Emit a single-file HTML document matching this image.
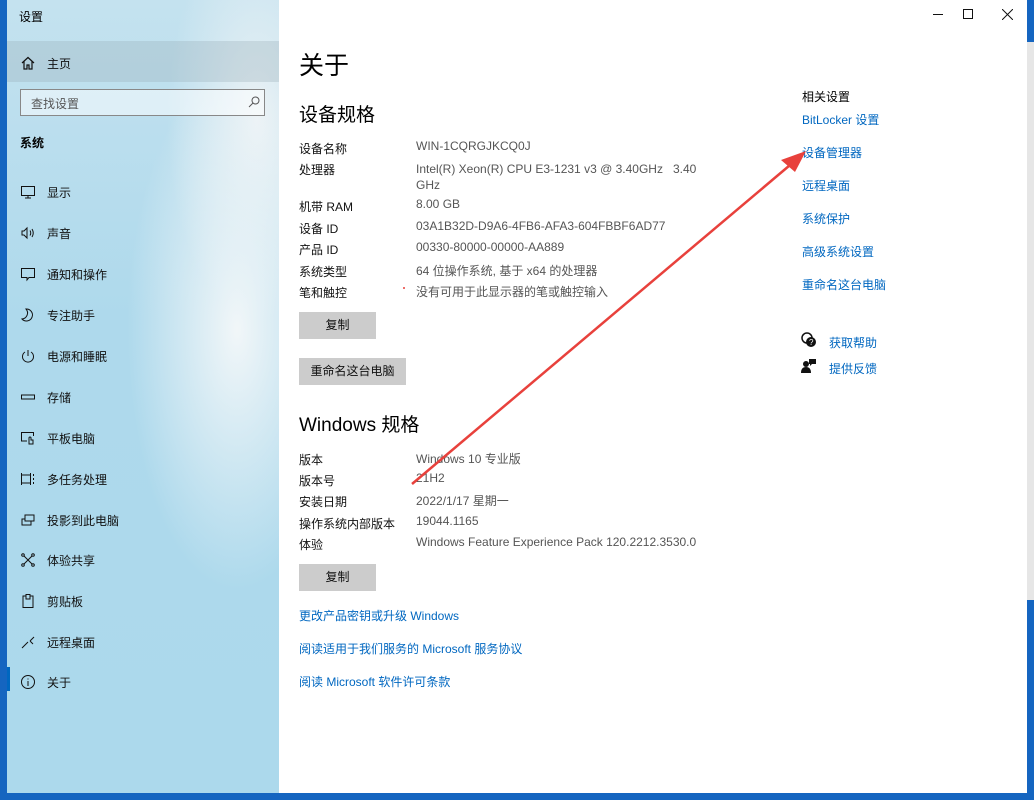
<!DOCTYPE html>
<html><head><meta charset="utf-8"><style>
*{margin:0;padding:0;box-sizing:border-box}
body{width:1034px;height:800px;position:relative;overflow:hidden;background:#1565c0;font-family:"Liberation Sans","Noto Sans CJK SC",sans-serif;font-size:12px;color:#000}
.abs{position:absolute;white-space:nowrap}
#side{position:absolute;left:7px;top:0;width:272px;height:793px;background:radial-gradient(ellipse 110px 260px at 230px 330px,rgba(245,248,249,.95),rgba(245,248,249,0)),radial-gradient(ellipse 90px 200px at 250px 120px,rgba(240,244,246,.9),rgba(240,244,246,0)),linear-gradient(180deg,#c4e2ef 0%,#aed9ec 40%,#acd9ec 100%)}
#main{position:absolute;left:279px;top:0;width:748px;height:793px;background:#fff}
.nav{position:absolute;left:40px;font-size:12px;color:#111}
.ic{position:absolute;left:13px;width:16px;height:16px}
.lbl{position:absolute;left:20px;color:#111}
.val{position:absolute;left:137px;color:#555}
.btn{position:absolute;left:20px;background:#ccc;height:27px;text-align:center;line-height:27px;color:#111}
.link{position:absolute;color:#0067c0}
</style></head><body>
<div class="abs" style="left:1027px;top:42px;width:7px;height:558px;background:#e6e6e6"></div>
<div id="side">
 <div class="abs" style="left:12px;top:8px;font-size:12px">设置</div>
 <div class="abs" style="left:0;top:41px;width:272px;height:41px;background:rgba(150,170,180,.3)"></div>
 <svg class="ic" style="top:55px" viewBox="0 0 16 16" fill="none" stroke="#111" stroke-width="1.2"><path d="M2 8L8 2.5 14 8M4 6.5V14h3v-4h2v4h3V6.5"/></svg>
 <div class="nav" style="top:55px">主页</div>
 <div class="abs" style="left:13px;top:89px;width:245px;height:27px;border:1.5px solid #888;background:rgba(255,255,255,.5)"></div>
 <div class="abs" style="left:24px;top:95px;color:#555">查找设置</div>
 <svg class="abs" style="left:240px;top:95px" width="14" height="14" viewBox="0 0 14 14" fill="none" stroke="#555"><circle cx="8.5" cy="5.5" r="3.5"/><path d="M6 8L2 12"/></svg>
 <div class="abs" style="left:13px;top:134px;font-weight:bold">系统</div>
 <svg class="ic" style="top:184px" viewBox="0 0 16 16" fill="none" stroke="#111"><rect x="1.5" y="2.5" width="13" height="9"/><path d="M5 14h6M8 11.5V14"/></svg><div class="nav" style="top:184px">显示</div>
 <svg class="ic" style="top:225px" viewBox="0 0 16 16" fill="none" stroke="#111"><path d="M2 6h2l3-3v10l-3-3H2zM10 5.5q1.5 2.5 0 5M12 4q2.5 4 0 8"/></svg><div class="nav" style="top:225px">声音</div>
 <svg class="ic" style="top:266px" viewBox="0 0 16 16" fill="none" stroke="#111"><path d="M1.5 2.5h13v9H9l-2 2.5v-2.5H1.5z"/></svg><div class="nav" style="top:266px">通知和操作</div>
 <svg class="ic" style="top:307px" viewBox="0 0 16 16" fill="none" stroke="#111"><path d="M6 2a6 6 0 1 1-4 10A6 6 0 0 0 6 2z"/></svg><div class="nav" style="top:307px">专注助手</div>
 <svg class="ic" style="top:348px" viewBox="0 0 16 16" fill="none" stroke="#111"><path d="M5 4a5.5 5.5 0 1 0 6 0M8 2v6"/></svg><div class="nav" style="top:348px">电源和睡眠</div>
 <svg class="ic" style="top:389px" viewBox="0 0 16 16" fill="none" stroke="#111"><rect x="1.5" y="6" width="13" height="4"/></svg><div class="nav" style="top:389px">存储</div>
 <svg class="ic" style="top:430px" viewBox="0 0 16 16" fill="none" stroke="#111"><path d="M7 11H1.5V2.5h12V6M9 14V8a1 1 0 0 1 2 0v2h2v4z"/></svg><div class="nav" style="top:430px">平板电脑</div>
 <svg class="ic" style="top:471px" viewBox="0 0 16 16" fill="none" stroke="#111"><path d="M1.5 2v12M10.5 2v12M1.5 4h9M1.5 12h9M13.5 3v2M13.5 7v2M13.5 11v2"/></svg><div class="nav" style="top:471px">多任务处理</div>
 <svg class="ic" style="top:512px" viewBox="0 0 16 16" fill="none" stroke="#111"><rect x="5" y="3" width="9" height="6"/><path d="M5 7H2v6h9v-4"/></svg><div class="nav" style="top:512px">投影到此电脑</div>
 <svg class="ic" style="top:552px" viewBox="0 0 16 16" fill="none" stroke="#111"><path d="M4 4l8 8M12 4l-8 8"/><circle cx="3" cy="3" r="1.3"/><circle cx="13" cy="3" r="1.3"/><circle cx="3" cy="13" r="1.3"/><circle cx="13" cy="13" r="1.3"/></svg><div class="nav" style="top:552px">体验共享</div>
 <svg class="ic" style="top:593px" viewBox="0 0 16 16" fill="none" stroke="#111"><path d="M3 3h3V1.5h4V3h3v11.5H3zM6 3v3h4V3"/></svg><div class="nav" style="top:593px">剪贴板</div>
 <svg class="ic" style="top:634px" viewBox="0 0 16 16" fill="none" stroke="#111"><path d="M2 14l6-6M14 3l-4 4M10 7l3 3"/></svg><div class="nav" style="top:634px">远程桌面</div>
 <div class="abs" style="left:0;top:667px;width:3px;height:24px;background:#0067c0"></div>
 <svg class="ic" style="top:674px" viewBox="0 0 16 16" fill="none" stroke="#111"><circle cx="8" cy="8" r="6.5"/><path d="M8 7v5M8 4.5v1"/></svg><div class="nav" style="top:674px">关于</div>
</div>
<div id="main">
 <div class="abs" style="left:654px;top:14px;width:10px;height:1px;background:#111"></div>
 <div class="abs" style="left:684px;top:9px;width:10px;height:10px;border:1px solid #111"></div>
 <svg class="abs" style="left:723px;top:9px" width="11" height="11" stroke="#111"><path d="M0 0L11 11M11 0L0 11"/></svg>
 <div class="abs" style="left:20px;top:46px;font-size:25px">关于</div>
 <div class="abs" style="left:20px;top:100px;font-size:19px">设备规格</div>
 <div class="lbl" style="top:140px">设备名称</div><div class="val" style="top:139px">WIN-1CQRGJKCQ0J</div>
 <div class="lbl" style="top:161px">处理器</div><div class="val" style="top:161px;line-height:16px">Intel(R) Xeon(R) CPU E3-1231 v3 @ 3.40GHz&nbsp;&nbsp; 3.40<br>GHz</div>
 <div class="lbl" style="top:198px">机带 RAM</div><div class="val" style="top:197px">8.00 GB</div>
 <div class="lbl" style="top:220px">设备 ID</div><div class="val" style="top:219px">03A1B32D-D9A6-4FB6-AFA3-604FBBF6AD77</div>
 <div class="lbl" style="top:241px">产品 ID</div><div class="val" style="top:240px">00330-80000-00000-AA889</div>
 <div class="lbl" style="top:263px">系统类型</div><div class="val" style="top:262px">64 位操作系统, 基于 x64 的处理器</div>
 <div class="lbl" style="top:284px">笔和触控</div><div class="val" style="top:283px">没有可用于此显示器的笔或触控输入</div>
 <div class="btn" style="top:312px;width:77px">复制</div>
 <div class="btn" style="top:358px;width:107px">重命名这台电脑</div>
 <div class="abs" style="left:20px;top:410px;font-size:19px">Windows 规格</div>
 <div class="lbl" style="top:451px">版本</div><div class="val" style="top:450px">Windows 10 专业版</div>
 <div class="lbl" style="top:472px">版本号</div><div class="val" style="top:471px">21H2</div>
 <div class="lbl" style="top:493px">安装日期</div><div class="val" style="top:492px">2022/1/17 星期一</div>
 <div class="lbl" style="top:515px">操作系统内部版本</div><div class="val" style="top:514px">19044.1165</div>
 <div class="lbl" style="top:536px">体验</div><div class="val" style="top:535px">Windows Feature Experience Pack 120.2212.3530.0</div>
 <div class="btn" style="top:564px;width:77px">复制</div>
 <div class="link" style="left:20px;top:607px">更改产品密钥或升级 Windows</div>
 <div class="link" style="left:20px;top:640px">阅读适用于我们服务的 Microsoft 服务协议</div>
 <div class="link" style="left:20px;top:673px">阅读 Microsoft 软件许可条款</div>
 <div class="abs" style="left:523px;top:88px">相关设置</div>
 <div class="link" style="left:523px;top:111px">BitLocker 设置</div>
 <div class="link" style="left:523px;top:144px">设备管理器</div>
 <div class="link" style="left:523px;top:177px">远程桌面</div>
 <div class="link" style="left:523px;top:210px">系统保护</div>
 <div class="link" style="left:523px;top:243px">高级系统设置</div>
 <div class="link" style="left:523px;top:276px">重命名这台电脑</div>
 <svg class="abs" style="left:522px;top:332px" width="16" height="16" viewBox="0 0 16 16"><circle cx="6" cy="6" r="5" fill="none" stroke="#111" stroke-width="1.5"/><circle cx="10" cy="10" r="5" fill="#111"/><text x="8" y="13" font-size="8" fill="#fff" font-family="Liberation Sans">?</text></svg>
 <div class="link" style="left:550px;top:334px">获取帮助</div>
 <svg class="abs" style="left:522px;top:358px" width="16" height="16" viewBox="0 0 16 16" fill="#111"><circle cx="5" cy="6" r="3"/><path d="M0 15q0-6 5-6t5 6z"/><path d="M8 1h7v5h-4l-2 2v-2H8z"/></svg>
 <div class="link" style="left:550px;top:360px">提供反馈</div>
</div>
<svg class="abs" style="left:0;top:0" width="1034" height="800"><line x1="412" y1="484" x2="796" y2="160" stroke="#e8413c" stroke-width="2.5"/><path d="M806 151L781 160L795 172Z" fill="#e8413c"/><circle cx="404" cy="288" r="1" fill="#e8413c"/></svg>
</body></html>
